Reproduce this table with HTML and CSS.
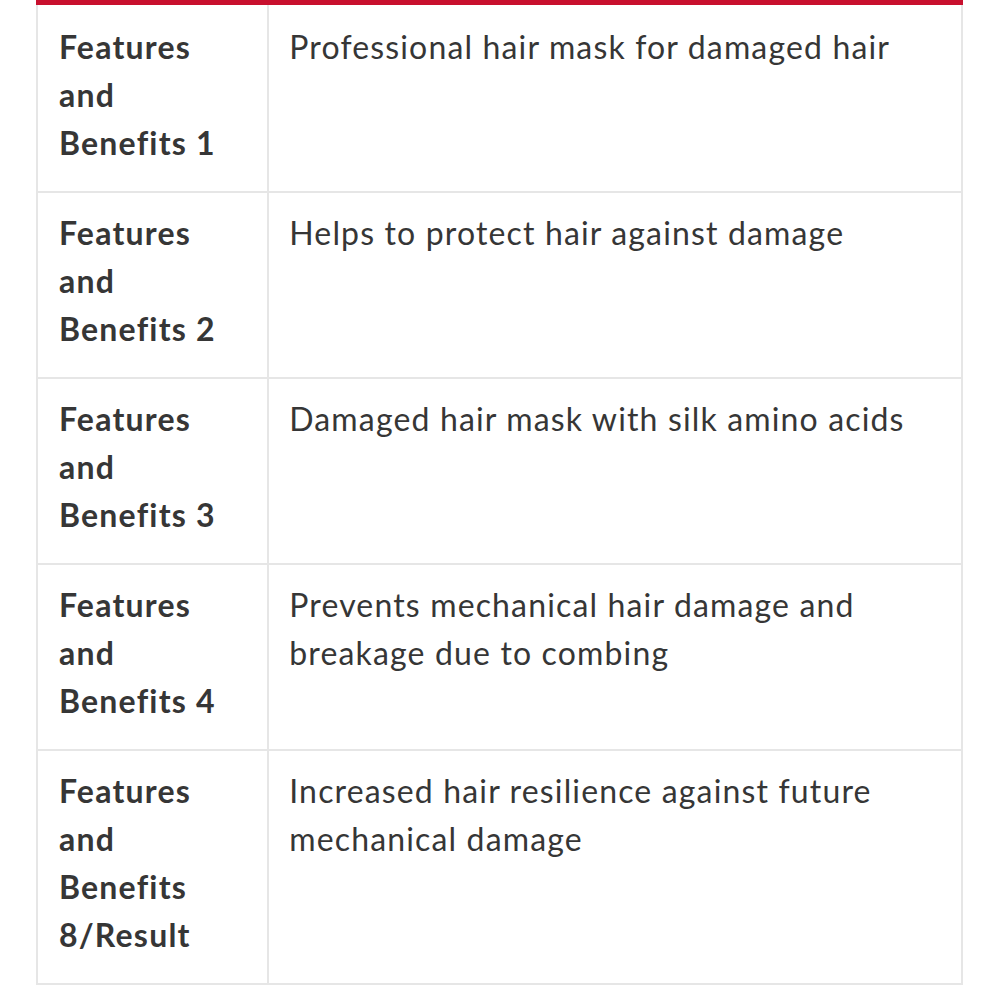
FILE: index.html
```html
<!DOCTYPE html>
<html>
<head>
<meta charset="utf-8">
<link rel="stylesheet" href="styles.css">
</head>
<body>
<table class="spec">
  <colgroup><col class="label-col"><col></colgroup>
  <tbody>
    <tr><th>Features and Benefits 1</th><td>Professional hair mask for damaged hair</td></tr>
    <tr><th>Features and Benefits 2</th><td>Helps to protect hair against damage</td></tr>
    <tr><th>Features and Benefits 3</th><td>Damaged hair mask with silk amino acids</td></tr>
    <tr><th>Features and Benefits 4</th><td>Prevents mechanical hair damage and breakage due to combing</td></tr>
    <tr><th>Features and Benefits 8/Result</th><td>Increased hair resilience against future mechanical damage</td></tr>
  </tbody>
</table>
</body>
</html>
```
FILE: styles.css
```css
html, body {
  margin: 0;
  padding: 0;
  background: #ffffff;
}
body {
  padding: 0 37px 0 36px;
  font-family: Lato, "Liberation Sans", sans-serif;
  color: #363636;
}
.spec {
  width: 100%;
  border-collapse: collapse;
  border-top: 5px solid #c8102e;
  table-layout: fixed;
}
.label-col {
  width: 25%;
}
.spec th, .spec td {
  border: 2px solid #e6e6e6;
  padding: 16px 20px 24px 21px;
  font-size: 32px;
  line-height: 48px;
  text-align: left;
  vertical-align: top;
}
.spec tr:first-child th, .spec tr:first-child td {
  border-top: none;
  padding-top: 18px;
}
.spec th {
  font-weight: 700;
  letter-spacing: 1.2px;
}
.spec td {
  font-weight: 400;
  padding-left: 20px;
  letter-spacing: 1.15px;
}
```
